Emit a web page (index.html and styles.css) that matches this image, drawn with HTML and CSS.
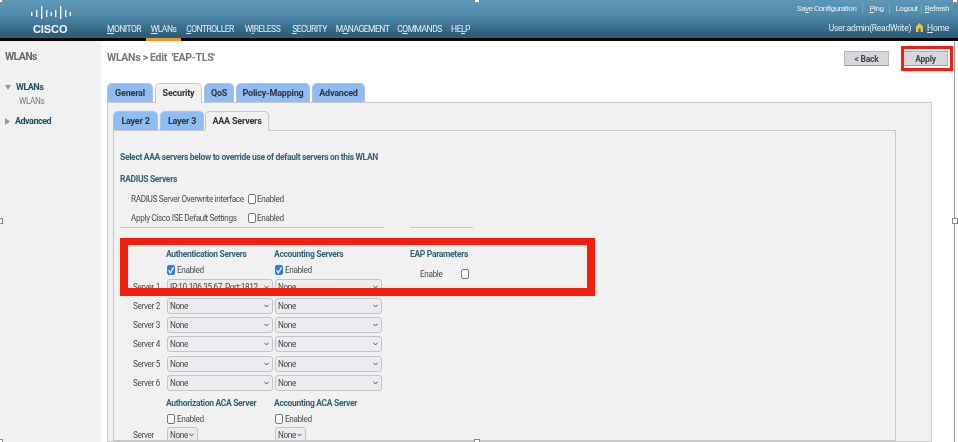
FILE: index.html
```html
<!DOCTYPE html>
<html lang="en">
<head>
<meta charset="utf-8">
<title>WLANs &gt; Edit</title>
<link rel="stylesheet" href="styles.css">
</head>
<body>
<div class="page">
<header class="topbar">
  <div class="logo">
    <svg class="logo-bars" width="40" height="14" viewBox="0 0 40 14" aria-hidden="true">
      <g fill="#f2f6f8">
        <rect x="0" y="7" width="1.4" height="4"/><rect x="5" y="5" width="1.4" height="7"/><rect x="10" y="1" width="1.4" height="13"/>
        <rect x="15" y="5" width="1.4" height="7"/><rect x="19.5" y="7" width="1.4" height="4"/><rect x="24" y="5" width="1.4" height="7"/>
        <rect x="29" y="1" width="1.4" height="13"/><rect x="34" y="5" width="1.4" height="7"/><rect x="38.6" y="7" width="1.4" height="4"/>
      </g>
    </svg>
    <span class="logo-word">CISCO</span>
  </div>
  <nav class="nav">
    <a class="nav-item nav-monitor"><u>M</u>ONITOR</a>
    <a class="nav-item nav-wlans"><u>W</u>LANs</a>
    <a class="nav-item nav-controller"><u>C</u>ONTROLLER</a>
    <a class="nav-item nav-wireless">W<u>I</u>RELESS</a>
    <a class="nav-item nav-security"><u>S</u>ECURITY</a>
    <a class="nav-item nav-management">M<u>A</u>NAGEMENT</a>
    <a class="nav-item nav-commands">C<u>O</u>MMANDS</a>
    <a class="nav-item nav-help">HE<u>L</u>P</a>
  </nav>
  <div class="utility">
    <div class="utility-row utility-links">
      <a>Sa<u>v</u>e Configuration</a><a class="sep"><u>P</u>ing</a><a class="sep sep-logout">Logout</a><a class="sep sep-refresh"><u>R</u>efresh</a>
    </div>
    <div class="utility-row utility-user">
      <span>User:admin(ReadWrite)</span>
      <svg class="home-icon" width="7" height="9" viewBox="0 0 7 9" aria-hidden="true"><path d="M3.5 0 7 3.6V9H4.6V5.6H2.4V9H0V3.6Z" fill="#f0c23c"/></svg>
      <a><u>H</u>ome</a>
    </div>
  </div>
</header>
<div class="shell">
  <aside class="sidebar">
    <h2 class="side-title">WLANs</h2>
    <div class="side-item side-open"><svg width="6" height="5" viewBox="0 0 6 5" aria-hidden="true"><path d="M0 0h6L3 5Z" fill="#7fa0a8"/></svg><span>WLANs</span></div>
    <div class="side-sub">WLANs</div>
    <div class="side-item side-closed"><svg width="5" height="7" viewBox="0 0 5 7" aria-hidden="true"><path d="M0 0v7l5-3.5Z" fill="#7fa0a8"/></svg><span>Advanced</span></div>
  </aside>
  <main class="content">
    <div class="title-row">
      <h1 class="page-title">WLANs &gt; Edit &nbsp;'EAP-TLS'</h1>
      <div class="actions">
        <button class="btn btn-back">&lt; Back</button>
        <button class="btn btn-apply">Apply</button>
      </div>
    </div>
    <div class="tabs tabs-outer">
      <span class="tab t-general">General</span>
      <span class="tab t-security is-active">Security</span>
      <span class="tab t-qos">QoS</span>
      <span class="tab t-policy">Policy-Mapping</span>
      <span class="tab t-advanced">Advanced</span>
    </div>
    <div class="panel-outer">
      <div class="tabs tabs-inner">
        <span class="tab t-l2">Layer 2</span>
        <span class="tab t-l3">Layer 3</span>
        <span class="tab t-aaa is-active">AAA Servers</span>
      </div>
      <div class="panel-inner">
        <p class="heading heading-select">Select AAA servers below to override use of default servers on this WLAN</p>
        <p class="heading heading-radius">RADIUS Servers</p>
        <div class="opt-row"><span class="opt-label">RADIUS Server Overwrite interface</span><span class="cb"></span><span class="cb-text">Enabled</span></div>
        <div class="opt-row"><span class="opt-label">Apply Cisco ISE Default Settings</span><span class="cb"></span><span class="cb-text">Enabled</span></div>
        <div class="rules"><span class="rule rule-a"></span><span class="rule rule-b"></span></div>
        <div class="server-grid">
          <span class="heading cell-a">Authentication Servers</span>
          <span class="heading cell-b">Accounting Servers</span>
          <span class="heading cell-c">EAP Parameters</span>

          <label class="cb-line cell-a"><span class="cb is-checked"><svg width="8" height="10" viewBox="0 0 8 10" aria-hidden="true"><path d="M1.5 5.2 3.3 7.8 6.6 2.4" fill="none" stroke="#fff" stroke-width="1.3"/></svg></span><span class="cb-text">Enabled</span></label>
          <label class="cb-line cell-b"><span class="cb is-checked"><svg width="8" height="10" viewBox="0 0 8 10" aria-hidden="true"><path d="M1.5 5.2 3.3 7.8 6.6 2.4" fill="none" stroke="#fff" stroke-width="1.3"/></svg></span><span class="cb-text">Enabled</span></label>
          <div class="eap cell-c"><span class="cb-text eap-text">Enable</span><span class="cb"></span></div>

          <span class="srv-label">Server 1</span>
          <select class="sel cell-a"><option>IP:10.106.35.67, Port:1812</option></select>
          <select class="sel cell-b"><option>None</option></select>
          <span class="srv-label">Server 2</span>
          <select class="sel cell-a"><option>None</option></select>
          <select class="sel cell-b"><option>None</option></select>
          <span class="srv-label">Server 3</span>
          <select class="sel cell-a"><option>None</option></select>
          <select class="sel cell-b"><option>None</option></select>
          <span class="srv-label">Server 4</span>
          <select class="sel cell-a"><option>None</option></select>
          <select class="sel cell-b"><option>None</option></select>
          <span class="srv-label">Server 5</span>
          <select class="sel cell-a"><option>None</option></select>
          <select class="sel cell-b"><option>None</option></select>
          <span class="srv-label">Server 6</span>
          <select class="sel cell-a"><option>None</option></select>
          <select class="sel cell-b"><option>None</option></select>

          <span class="heading heading-aca cell-a">Authorization ACA Server</span>
          <span class="heading heading-aca cell-b">Accounting ACA Server</span>

          <label class="cb-line cell-a"><span class="cb"></span><span class="cb-text">Enabled</span></label>
          <label class="cb-line cell-b"><span class="cb"></span><span class="cb-text">Enabled</span></label>

          <span class="srv-label">Server</span>
          <select class="sel sel-short cell-a"><option>None</option></select>
          <select class="sel sel-short cell-b"><option>None</option></select>
        </div>
      </div>
    </div>
  </main>
</div>
<div class="mark mark-servers"></div>
<div class="mark mark-apply"></div>
<span class="handle h-tl"></span><span class="handle h-tc"></span><span class="handle h-tr"></span>
<span class="handle h-ml"></span><span class="handle h-mr"></span><span class="handle h-bl"></span><span class="handle h-bc"></span>
</div>
</body>
</html>
```

FILE: styles.css
```css
* { box-sizing: border-box; }
html, body { margin: 0; height: 100%; }
body { background: #fff; overflow: hidden; }
.page {
  width: 958px; height: 442px; overflow: hidden; position: relative; background: #fff; filter: blur(0.35px);
  font-family: Roboto, sans-serif; font-size: 8.2px; letter-spacing: -0.35px; color: #4a4a4a;
  display: flex; flex-direction: column;
}
p, h1, h2 { margin: 0; }

/* top bar */
.topbar {
  height: 41px; flex: none; display: flex;
  background: linear-gradient(#5f97b7 0, #508aa9 40%, #2c5f7c 92%);
  border-bottom: 3px solid #050505; color: #e9eff3; font-size: 8.5px;
}
.logo { width: 107px; flex: none; padding: 5px 0 0 31px; display: flex; flex-direction: column; }
.logo-word { font: bold 11px "Liberation Sans", sans-serif; letter-spacing: -0.1px; color: #f4f7f9; margin: 4px 0 0 2px; line-height: 12px; }
.nav { display: flex; align-items: flex-end; letter-spacing: -0.5px; }
.nav-item { height: 16px; line-height: 15px; display: block; text-align: center; white-space: nowrap; }
.nav-monitor { width: 39px; text-align: left; }
.nav-wlans { width: 35px; height: 19px; margin-bottom: -3px; border-bottom: 3px solid #ef9a22; }
.nav-controller { width: 58px; }
.nav-wireless { width: 47px; }
.nav-security { width: 47px; }
.nav-management { width: 59px; }
.nav-commands { width: 55px; }
.nav-help { width: 27px; }
.utility { margin-left: auto; padding: 3px 9px 0 0; }
.utility-row { height: 21px; line-height: 11px; display: flex; justify-content: flex-end; align-items: flex-start; }
.utility-links { font-size: 8px; letter-spacing: -0.45px; }
.utility-user { letter-spacing: -0.25px; margin-top: -1px; }
.utility-links a.sep { margin-left: 6px; padding-left: 6px; border-left: 1px solid #7aa5bd; }
.utility-links a.sep-logout { margin-left: 5px; }
.utility-links a.sep-refresh { margin-left: 3px; padding-left: 3px; }
.home-icon { margin: 0 4px 0 5px; }

/* shell */
.shell { display: flex; flex: 1; min-height: 0; padding-right: 3px; }
.sidebar { width: 101px; flex: none; background: #f1f1f1; padding: 9px 0 0 5px; }
.side-title { font-size: 10.5px; letter-spacing: -0.6px; font-weight: bold; color: #666; line-height: 14px; margin-bottom: 17px; }
.side-item { display: flex; align-items: center; gap: 5px; font-weight: bold; color: #1f4e66; line-height: 12px; height: 12px; font-size: 9px; letter-spacing: -0.5px; }
.side-sub { padding-left: 14px; color: #777; line-height: 12px; margin: 2px 0 8px; }
.content { flex: 1; padding: 9px 0 0 6px; min-width: 0; display: flex; flex-direction: column; border-right: 1px solid #999; }
.title-row { display: flex; justify-content: space-between; height: 33px; flex: none; }
.page-title { font-size: 10.5px; letter-spacing: -0.3px; font-weight: bold; color: #777; line-height: 16px; }
.actions { display: flex; gap: 14px; padding: 1px 6px 0 0; }
.btn { width: 45px; height: 15px; padding: 0; border: 1px solid #b5b5b5; border-bottom-color: #9a9a9a; background: #d6d6dc; font: inherit; font-size: 8.5px; font-weight: bold; letter-spacing: -0.2px; color: #444; line-height: 12px; }

/* tabs */
.tabs { display: flex; height: 19px; flex: none; gap: 2px; font-weight: bold; color: #333; font-size: 9px; letter-spacing: -0.2px; }
.tab { display: block; text-align: center; line-height: 18px; border: 1px solid #a9c5e6; border-bottom: 0; border-radius: 5px 5px 0 0; background: #8ebcf5; white-space: nowrap; }
.tab.is-active { background: #f1f1f1; border-color: #c7c7c7; position: relative; z-index: 1; height: 20px; }
.t-general { width: 46px; } .t-security { width: 47px; } .t-qos { width: 30px; } .t-policy { width: 74px; } .t-advanced { width: 53px; }
.t-l2 { width: 45px; } .t-l3 { width: 44px; margin-right: -1px; } .t-aaa { width: 64px; }
.panel-outer { width: 825px; flex: 1; background: #f1f1f1; border: 1px solid #c9c9c9; padding: 8px 0 0 5px; display: flex; flex-direction: column; min-height: 0; }
.panel-inner { width: 783px; flex: 1; border: 1px solid #c9c9c9; padding: 21px 0 0 6px; min-height: 0; overflow: hidden; }

/* form */
.heading { font-size: 8.5px; font-weight: bold; color: #2f6379; line-height: 11px; display: block; white-space: nowrap; letter-spacing: -0.32px; }
.heading-radius { margin-top: 11px; }
.heading-aca { margin-top: 4px; }
.opt-row { display: flex; align-items: center; height: 19.5px; padding-left: 11px; }
.heading-radius + .opt-row { margin-top: 4px; }
.opt-label { width: 117px; white-space: nowrap; }
.cb { width: 8px; height: 10px; flex: none; display: inline-block; border: 1px solid #777; border-radius: 2px; background: #fff; }
.cb.is-checked { background: #2f7fe0; border-color: #2f7fe0; }
.cb.is-checked svg { display: block; margin: -1px; }
.cb-text { white-space: nowrap; color: #4a4a4a; margin-left: 1px; }
.rules { display: flex; gap: 26px; margin-top: -1px; height: 19px; }
.rule { height: 1px; background: #c2c5c9; display: block; }
.rule-a { width: 264px; } .rule-b { width: 63px; }
.server-grid {
  display: grid; grid-template-columns: 46px 108px 136px 100px;
  grid-template-rows: 16px 16px 18.5px repeat(5, 19.2px) 19px 15px 17px; align-items: center;
}
.cell-a { grid-column: 2; } .cell-b { grid-column: 3; } .cell-c { grid-column: 4; }
.cb-line { display: flex; align-items: center; gap: 1px; padding-left: 1px; }
.eap { display: flex; align-items: center; padding-left: 9px; margin-top: 8px; }
.eap-text { width: 41px; }
.srv-label { grid-column: 1; padding-left: 13px; white-space: nowrap; }
.sel {
  appearance: none; width: 106px; height: 16px; padding: 0 0 0 2px; margin-left: 1px; font: inherit; letter-spacing: inherit; color: #444;
  border: 1px solid #c4c4c8; border-radius: 3px; background: #ececf0 url("data:image/svg+xml,%3Csvg xmlns='http://www.w3.org/2000/svg' width='5' height='4'%3E%3Cpath d='M.5.8 2.5 3 4.5.8' fill='none' stroke='%23555'/%3E%3C/svg%3E") no-repeat right 3px center;
}
.sel.cell-b { width: 107px; }
.sel.sel-short { width: 31px; }

/* overlays */
.mark { position: absolute; border: 7px solid #f01f10; pointer-events: none; }
.mark-servers { left: 120px; top: 238px; width: 475px; height: 58px; border-width: 7px 8px 8px; }
.mark-apply { left: 901px; top: 46px; width: 52px; height: 25px; border-width: 3px; }
.handle { position: absolute; width: 6px; height: 6px; background: #fff; border: 1px solid #888; }
.h-tl { left: -3px; top: -3px; } .h-tc { left: 474px; top: -3px; } .h-tr { left: 952px; top: -3px; }
.h-ml { left: -3px; top: 218px; } .h-mr { left: 952px; top: 218px; } .h-bl { left: -3px; top: 439px; } .h-bc { left: 474px; top: 439px; }
```
